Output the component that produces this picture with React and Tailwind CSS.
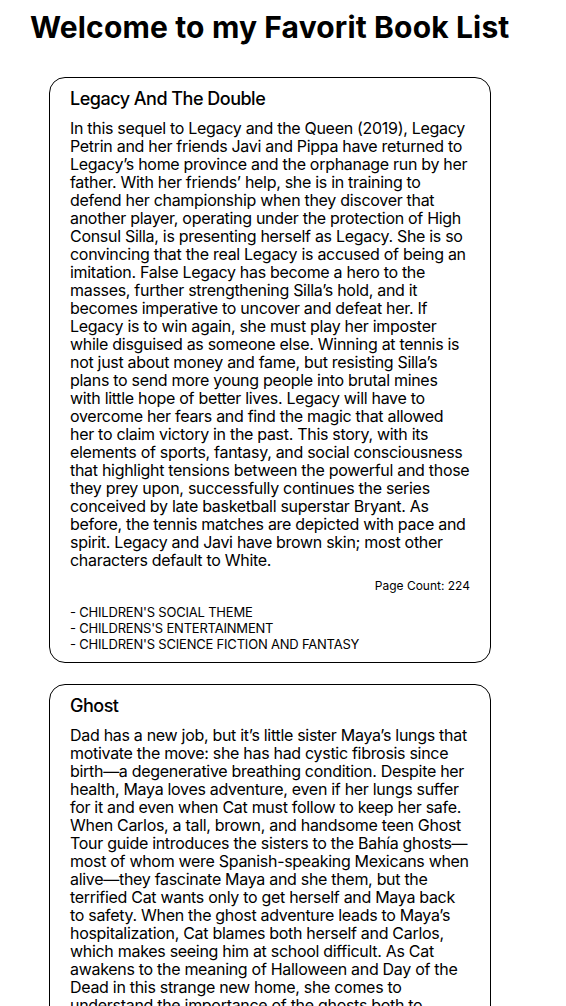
import React from 'react';

const books = [
    {
        title: 'Legacy And The Double',
        description:
            'In this sequel to Legacy and the Queen (2019), Legacy Petrin and her friends Javi and Pippa have returned to Legacy\u2019s home province and the orphanage run by her father. With her friends\u2019 help, she is in training to defend her championship when they discover that another player, operating under the protection of High Consul Silla, is presenting herself as Legacy. She is so convincing that the real Legacy is accused of being an imitation. False Legacy has become a hero to the masses, further strengthening Silla\u2019s hold, and it becomes imperative to uncover and defeat her. If Legacy is to win again, she must play her imposter while disguised as someone else. Winning at tennis is not just about money and fame, but resisting Silla\u2019s plans to send more young people into brutal mines with little hope of better lives. Legacy will have to overcome her fears and find the magic that allowed her to claim victory in the past. This story, with its elements of sports, fantasy, and social consciousness that highlight tensions between the powerful and those they prey upon, successfully continues the series conceived by late basketball superstar Bryant. As before, the tennis matches are depicted with pace and spirit. Legacy and Javi have brown skin; most other characters default to White.',
        pageCount: 224,
        categories: [
            "CHILDREN'S SOCIAL THEME",
            "CHILDRENS'S ENTERTAINMENT",
            "CHILDREN'S SCIENCE FICTION AND FANTASY"
        ]
    },
    {
        title: 'Ghost',
        description:
            'Dad has a new job, but it\u2019s little sister Maya\u2019s lungs that motivate the move: she has had cystic fibrosis since birth\u2014a degenerative breathing condition. Despite her health, Maya loves adventure, even if her lungs suffer for it and even when Cat must follow to keep her safe. When Carlos, a tall, brown, and handsome teen Ghost Tour guide introduces the sisters to the Bah\u00eda ghosts\u2014most of whom were Spanish-speaking Mexicans when alive\u2014they fascinate Maya and she them, but the terrified Cat wants only to get herself and Maya back to safety. When the ghost adventure leads to Maya\u2019s hospitalization, Cat blames both herself and Carlos, which makes seeing him at school difficult. As Cat awakens to the meaning of Halloween and Day of the Dead in this strange new home, she comes to understand the importance of the ghosts both to herself and to the people she loves.',
        pageCount: 256,
        categories: ['COMICS & GRAPHIC NOVELS', "CHILDREN'S FANTASY & MAGIC"]
    }
];

const BookCard = ({ book }) => (
    <div className="w-[442px] border border-black rounded-2xl pl-5 pr-[19px] pt-[10px] pb-[10px] text-black">
        <h2 className="text-[18px] leading-[22px] font-medium tracking-[-0.5px]">{book.title}</h2>
        <p className="mt-[9px] text-[16px] leading-[18px] tracking-[-0.3px]">{book.description}</p>
        <p className="mt-[9px] pr-px text-right text-[12px] leading-[16px]">Page Count: {book.pageCount}</p>
        <ul className="mt-[10px] text-[13px] leading-[16px] tracking-[-0.2px]">
            {book.categories.map((c) => (
                <li key={c}>- {c}</li>
            ))}
        </ul>
    </div>
);

export default function App() {
    return (
        <div className="min-h-screen bg-white font-['Inter',sans-serif]">
            <h1 className="pl-[30px] pt-[8px] text-[30px] leading-[38px] font-bold tracking-[0.15px] text-black">
                Welcome to my Favorit Book List
            </h1>
            <div className="pl-[49px] pt-[31px] flex flex-col gap-[21px]">
                {books.map((b) => (
                    <BookCard key={b.title} book={b} />
                ))}
            </div>
        </div>
    );
}
